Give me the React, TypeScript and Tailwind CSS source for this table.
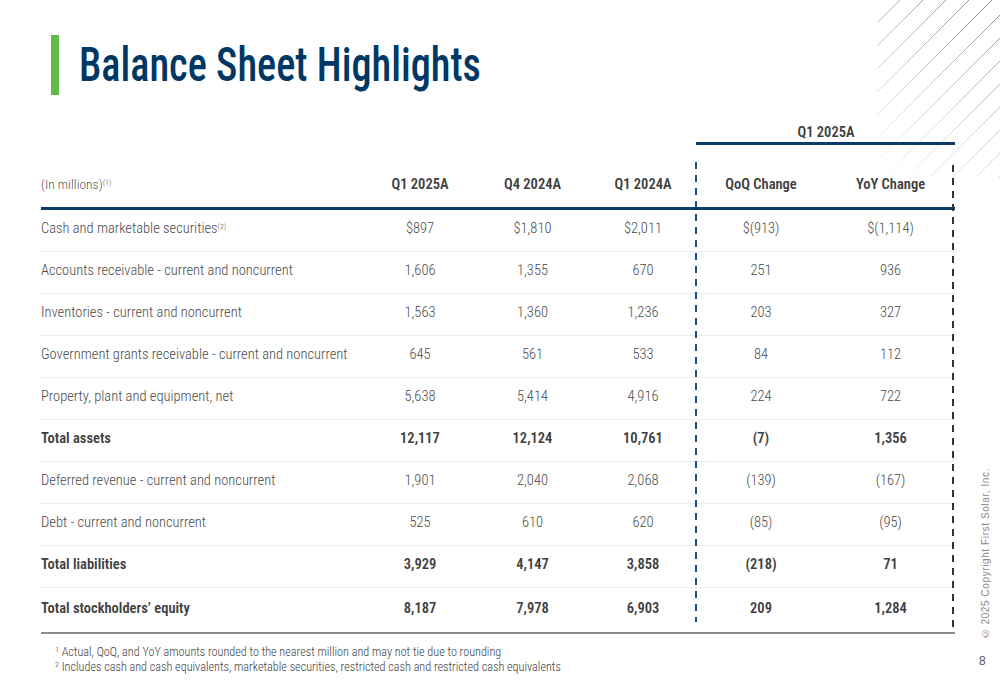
type Row = {
  label: string;
  note?: string;
  values: string[];
  bold?: boolean;
};

const rows: Row[] = [
  { label: 'Cash and marketable securities', note: '(2)', values: ['$897', '$1,810', '$2,011', '$(913)', '$(1,114)'] },
  { label: 'Accounts receivable - current and noncurrent', values: ['1,606', '1,355', '670', '251', '936'] },
  { label: 'Inventories - current and noncurrent', values: ['1,563', '1,360', '1,236', '203', '327'] },
  { label: 'Government grants receivable - current and noncurrent', values: ['645', '561', '533', '84', '112'] },
  { label: 'Property, plant and equipment, net', values: ['5,638', '5,414', '4,916', '224', '722'] },
  { label: 'Total assets', values: ['12,117', '12,124', '10,761', '(7)', '1,356'], bold: true },
  { label: 'Deferred revenue - current and noncurrent', values: ['1,901', '2,040', '2,068', '(139)', '(167)'] },
  { label: 'Debt - current and noncurrent', values: ['525', '610', '620', '(85)', '(95)'] },
  { label: 'Total liabilities', values: ['3,929', '4,147', '3,858', '(218)', '71'], bold: true },
  { label: 'Total stockholders\u2019 equity', values: ['8,187', '7,978', '6,903', '209', '1,284'], bold: true },
];

const headers = ['Q1 2025A', 'Q4 2024A', 'Q1 2024A', 'QoQ Change', 'YoY Change'];

// 41px → 955px, columns centred on the reference's figures
const grid = 'grid grid-cols-[324px_110px_115px_106px_130px_129px]';

function Hatching() {
  const lines = [];
  for (let c = 25; c < 320; c += 23) {
    const x1 = Math.max(2, c - 178);
    const y1 = c - x1;
    const x2 = Math.min(125, c);
    const y2 = c - x2;
    lines.push(<line key={c} x1={x1} y1={y1} x2={x2} y2={y2} />);
  }
  return (
    <svg width="125" height="185" viewBox="0 0 125 185" className="absolute left-[875px] top-0">
      <defs>
        <linearGradient id="fade" gradientUnits="userSpaceOnUse" x1="0" y1="185" x2="125" y2="0">
          <stop offset="0" stopColor="#dadada" stopOpacity="0.15" />
          <stop offset="0.45" stopColor="#c4c4c4" stopOpacity="0.75" />
          <stop offset="1" stopColor="#8a8a8a" stopOpacity="1" />
        </linearGradient>
      </defs>
      <g stroke="url(#fade)" strokeWidth="1">{lines}</g>
    </svg>
  );
}

export default function App() {
  return (
    <div className="relative h-[685px] w-[1000px] overflow-hidden bg-white font-['Roboto',sans-serif] [font-stretch:condensed] text-[#4a4a4a]">
      <Hatching />

      {/* title */}
      <div className="flex items-center gap-5 pl-[51px] pt-[35px]">
        <div className="h-[60px] w-2 shrink-0 bg-[#62bb46]" />
        <h1 className="origin-left scale-x-[0.84] whitespace-nowrap text-[48px] font-medium leading-none text-[#003865]">
          Balance Sheet Highlights
        </h1>
      </div>

      {/* table */}
      <div className="relative ml-[41px] mt-[26px] w-[914px]">
        <div className={grid}>
          <div className="col-start-5 col-span-2 flex h-[24px] items-end justify-center border-b-[3px] border-[#0d3b69] pb-[2px] pl-px text-[14.5px] font-semibold leading-none text-[#3f3f3f]">
            Q1 2025A
          </div>
        </div>

        <div className={`${grid} mt-[17px] h-[48px] items-center border-b-[3px] border-[#0d3b69]`}>
          <div className="text-[13.5px] font-light text-[#555]">
            (In millions)<sup className="text-[8px]">(1)</sup>
          </div>
          {headers.map((h) => (
            <div key={h} className="text-center text-[14.5px] font-semibold text-[#3f3f3f]">
              {h}
            </div>
          ))}
        </div>

        {rows.map((r, i) => (
          <div
            key={r.label}
            className={`${grid} items-center pb-[3px] ${
              i === rows.length - 1 ? 'h-[44px]' : 'h-[42px] border-b border-[#ececec]'
            } ${r.bold ? 'font-semibold text-[#3f3f3f]' : 'font-light'} text-[14.5px]`}
          >
            <div className="whitespace-nowrap">
              {r.label}
              {r.note && <sup className="text-[8px]">{r.note}</sup>}
            </div>
            {r.values.map((v, j) => (
              <div key={j} className="text-center">
                {v}
              </div>
            ))}
          </div>
        ))}

        <div className="h-[2px] bg-[#8c8c8c]" />

        {/* dashed frame around the change columns */}
        <div className="absolute left-[654px] top-[41px] h-[460px] w-[2px] bg-[repeating-linear-gradient(to_bottom,#1f4f80_0_7px,transparent_7px_13px)]" />
        <div className="absolute left-[911px] top-[44px] h-[467px] w-[2px] bg-[repeating-linear-gradient(to_bottom,#333_0_7px,transparent_7px_13px)]" />
      </div>

      {/* footnotes */}
      <div className="ml-[55px] mt-[11px] text-[12.2px] font-light leading-[15px] text-[#404040]">
        <p>
          <sup className="text-[8px]">1</sup> Actual, QoQ, and YoY amounts rounded to the nearest million and may not tie due to rounding
        </p>
        <p>
          <sup className="text-[8px]">2</sup> Includes cash and cash equivalents, marketable securities, restricted cash and restricted cash equivalents
        </p>
      </div>

      <div className="absolute left-[978px] top-[468px] rotate-180 font-['Liberation_Sans',sans-serif] text-[10px] tracking-[0.6px] text-[#8a8a8a] [font-stretch:normal] [writing-mode:vertical-rl]">
        © 2025 Copyright First Solar, Inc.
      </div>
      <div className="absolute left-[979px] top-[652px] font-['Liberation_Sans',sans-serif] text-[12px] text-[#555] [font-stretch:normal]">
        8
      </div>
    </div>
  );
}
